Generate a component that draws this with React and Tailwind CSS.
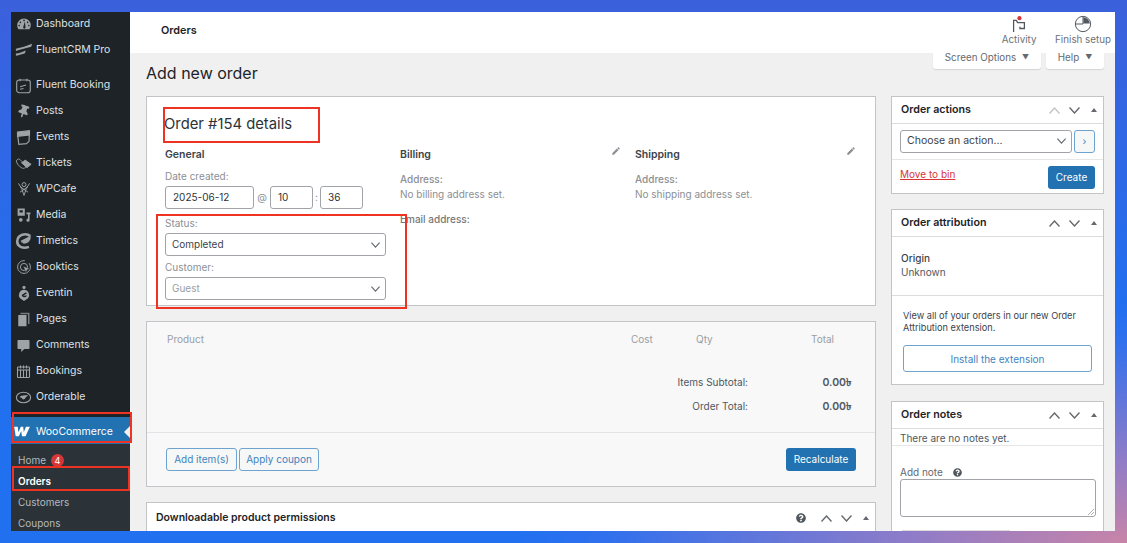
import { FaThumbtack, FaQuestionCircle } from "react-icons/fa";
import { MdEdit } from "react-icons/md";

const gray = "#9ea3a8";

function Dashboard() {
  return (
    <svg viewBox="0 0 20 20" className="w-[16px] h-[16px]" fill={gray}>
      <path d="M10 3a8.500 8.500 0 0 0-8.500 8.500c0 2 .7 3.800 1.800 5.200h13.400a8.400 8.400 0 0 0 1.800-5.200A8.500 8.500 0 0 0 10 3z" />
      <circle cx="10" cy="5.500" r="1" fill="#1d2327" />
      <circle cx="5.500" cy="8" r="1" fill="#1d2327" />
      <circle cx="14.500" cy="8" r="1" fill="#1d2327" />
      <circle cx="4" cy="12" r="1" fill="#1d2327" />
      <circle cx="16" cy="12" r="1" fill="#1d2327" />
      <path d="M9 14l2-7 1 7.500a1.500 1.500 0 0 1-3-.5z" fill="#1d2327" />
    </svg>
  );
}

function FluentCrm() {
  return (
    <svg viewBox="0 0 20 20" className="w-[18px] h-[18px]" fill={gray}>
      <path d="M1 8.500C7 7.500 13 5.500 19 3l-1 3.500C12 8 7 9.500 1 11z" />
      <path d="M1 14c4-.5 7-2 11-3.500l-1 3c-3 1-6 2-10 3z" />
    </svg>
  );
}

function FluentBooking() {
  return (
    <svg viewBox="0 0 20 20" className="w-[17px] h-[17px]" fill="none" stroke={gray} strokeWidth="1.300">
      <rect x="2" y="3.500" width="16" height="15" rx="3" />
      <path d="M6 2v3M14 2v3" />
      <path d="M6 11.500l7-2M6 14.500l4-1" />
    </svg>
  );
}

function Events() {
  return (
    <svg viewBox="0 0 20 20" className="w-[17px] h-[17px]" fill="none" stroke={gray} strokeWidth="1.400">
      <path d="M3 6l1.500 12 9-.7 3-2.800L17 4z" />
      <path d="M3 3.500L17 2v5L3 8.500z" fill={gray} />
    </svg>
  );
}

function Tickets() {
  return (
    <svg viewBox="0 0 20 20" className="w-[17px] h-[17px]" fill="none" stroke={gray} strokeWidth="1">
      <path d="M1.500 7c1-2 3-3 4-2l3 3c-1 1 0 2.500 1.500 3l3 3c-1 1.500-3 2-4.500 1.500C5 14 2 10 1.500 7z" />
      <path d="M8 9l4-3 7 5-5 4z" fill={gray} />
    </svg>
  );
}

function WpCafe() {
  return (
    <svg viewBox="0 0 20 20" className="w-[16px] h-[16px]" fill="none" stroke={gray} strokeWidth="1.200">
      <path d="M3 3l4 6 3 9M17 3l-4 6-3 9M5 14l10-7M15 14L5 7" />
      <circle cx="10" cy="4.500" r="2.500" />
    </svg>
  );
}

function Media() {
  return (
    <svg viewBox="0 0 20 20" className="w-[16px] h-[16px]" fill={gray}>
      <path d="M2 2h9v9H2zM4.500 4v3h4V4z" fillRule="evenodd" />
      <path d="M13 7h5v2h-1v7.500a2 2 0 1 1-2-2V9h-2z" />
      <circle cx="6" cy="16" r="2.300" />
    </svg>
  );
}

function Timetics() {
  return (
    <svg viewBox="0 0 20 20" className="w-[18px] h-[18px]" fill="none" stroke={gray} strokeWidth="2.800">
      <path d="M17 4.500C12 .5 3 3 2.500 10c-.5 6 6 9 13 6.500" />
      <path d="M7 11l9-4.500c0 3-3 5.500-7 5" />
    </svg>
  );
}

function Booktics() {
  return (
    <svg viewBox="0 0 20 20" className="w-[16px] h-[16px]" fill="none" stroke={gray} strokeWidth="1.200">
      <circle cx="10" cy="10" r="8" strokeDasharray="38 6" />
      <circle cx="10" cy="10" r="4.500" />
      <path d="M9 9l8 3-3 1.500-1.500 3.500z" fill={gray} stroke="#1d2327" strokeWidth=".6" />
    </svg>
  );
}

function Eventin() {
  return (
    <svg viewBox="0 0 20 20" className="w-[16px] h-[18px]" fill={gray}>
      <circle cx="10" cy="3" r="2" />
      <path d="M10 6a6.500 6.500 0 0 0-5 10.500L10 20l5-3.500A6.500 6.500 0 0 0 10 6zm-3 6.500l5.500-3.500 1 1.500-4.500 3 5-.5c-1 2-4 3-6 1.500z" fillRule="evenodd" />
    </svg>
  );
}

function Pages() {
  return (
    <svg viewBox="0 0 20 20" className="w-[15px] h-[15px]" fill={gray}>
      <path d="M6 1h12v15h-2V3H6z" opacity=".7" />
      <path d="M3 4h11v15H3z" />
    </svg>
  );
}

function Comments() {
  return (
    <svg viewBox="0 0 20 20" className="w-[15px] h-[15px]" fill={gray}>
      <path d="M3 2.500h14a1 1 0 0 1 1 1v10a1 1 0 0 1-1 1h-6l-4 4v-4H3a1 1 0 0 1-1-1v-10a1 1 0 0 1 1-1z" />
    </svg>
  );
}

function Bookings() {
  return (
    <svg viewBox="0 0 20 20" className="w-[15px] h-[15px]" fill="none" stroke={gray} strokeWidth="1.400">
      <rect x="2" y="4" width="16" height="14" rx="1" />
      <path d="M2 8h16M6 2v4M10 2v4M14 2v4M6 8v10M10 8v10M14 8v10" />
    </svg>
  );
}

function Orderable() {
  return (
    <svg viewBox="0 0 22 20" className="w-[17px] h-[15px]" fill="none" stroke={gray} strokeWidth="1.500">
      <ellipse cx="11" cy="10" rx="9.500" ry="7" />
      <path d="M6 9.500c1-2 4-2.500 11-2.500-1 1.500-2 2-3 2.500 0 1.500-2 3-4 3l-1-2z" fill={gray} stroke="none" />
    </svg>
  );
}

function WooLogo() {
  return (
    <svg viewBox="0 0 20 14" className="w-[16px] h-[11px]" fill="#fff">
      <path d="M0 1h4.500l1 7 3-7h3l.8 7L15 1h5l-5.500 12H10l-1-6.500L6 13H2z" />
    </svg>
  );
}

const topItems = [
  ["Dashboard", Dashboard, "h-[25px] pb-[1px]"],
  ["FluentCRM Pro", FluentCrm, "h-[26px] mb-[9px]"],
  ["Fluent Booking", FluentBooking, "h-[26px]"],
  ["Posts", () => <FaThumbtack color={gray} size={13} className="rotate-[20deg]" />, "h-[26px]"],
  ["Events", Events, "h-[26px]"],
  ["Tickets", Tickets, "h-[26px]"],
  ["WPCafe", WpCafe, "h-[26px]"],
  ["Media", Media, "h-[26px]"],
  ["Timetics", Timetics, "h-[26px]"],
  ["Booktics", Booktics, "h-[26px]"],
  ["Eventin", Eventin, "h-[26px]"],
  ["Pages", Pages, "h-[26px]"],
  ["Comments", Comments, "h-[26px]"],
  ["Bookings", Bookings, "h-[26px]"],
  ["Orderable", Orderable, "h-[26px]"],
];

function Sidebar() {
  return (
    <aside className="w-[119px] shrink-0 bg-[#1d2327] flex flex-col overflow-hidden">
      {topItems.map(([label, Icon, rowClass]) => (
        <div key={label} className={`shrink-0 flex items-center text-[10.500px] text-[#dfe1e3] ${rowClass}`}>
          <span className="w-[25px] flex justify-center shrink-0"><Icon /></span>
          <span>{label}</span>
        </div>
      ))}
      <div className="relative mt-[7px] h-[27px] pt-[2px] shrink-0 bg-[#2271b1] flex items-center text-[10.500px] text-white">
        <span className="w-[22px] flex justify-center shrink-0"><WooLogo /></span>
        <span className="ml-[3px]">WooCommerce</span>
        <span className="absolute right-0 top-[9px] border-y-[6px] border-y-transparent border-r-[6px] border-r-[#f0f0f1]" />
      </div>
      <div className="flex-1 bg-[#2c3338] pt-[6px] text-[10px] text-[#b4b9be]">
        <div className="h-[21px] flex items-center pl-[7px] gap-[5px]">
          Home
          <span className="w-[13px] h-[13px] rounded-full bg-[#d63638] text-white text-[9px] flex items-center justify-center">4</span>
        </div>
        <div className="h-[21px] flex items-center pl-[7px] font-semibold text-white">Orders</div>
        <div className="h-[21px] flex items-center pl-[7px]">Customers</div>
        <div className="h-[21px] flex items-center pl-[7px]">Coupons</div>
      </div>
    </aside>
  );
}

function TopBar() {
  return (
    <header className="h-[41px] shrink-0 bg-white flex items-center justify-between pl-[31px] pr-[4px]">
      <span className="text-[10.800px] font-semibold text-[#1d2327] -mt-[3px]">Orders</span>
      <div className="flex items-start self-start">
        <div className="w-[56px] flex flex-col items-center text-[9.800px] leading-[12px] text-[#6c7176]">
          <svg viewBox="0 0 20 20" className="w-[18px] h-[18px] mt-[3px]" fill="none" stroke="#50575e" strokeWidth="1.400">
            <path d="M4 19V6h3l1.500 2.500H16V15h-5v-2" />
            <circle cx="10.500" cy="3.500" r="2.300" fill="#d63638" stroke="none" />
          </svg>
          <span className="mt-[1px]">Activity</span>
        </div>
        <div className="ml-[8px] flex flex-col items-center text-[9.800px] leading-[12px] text-[#6c7176]">
          <svg viewBox="0 0 20 20" className="w-[18px] h-[18px] mt-[3px]" fill="none" stroke="#50575e" strokeWidth="1.100">
            <circle cx="10" cy="10" r="8.500" />
            <path d="M10 2v8H2" />
            <path d="M10.500 2.500a7.500 7.500 0 0 1 7 7h-7z" fill="#50575e" stroke="none" />
          </svg>
          <span className="mt-[1px]">Finish setup</span>
        </div>
      </div>
    </header>
  );
}

function ScreenTabs() {
  return (
    <div className="flex justify-end gap-[5px] pr-[11px] text-[9.800px] text-[#646970]">
      <div className="w-[108px] h-[16px] pb-[5px] bg-white rounded-b-[3px] shadow-[0_1px_1px_rgba(0,0,0,0.12)] flex items-center justify-center gap-[6px]">
        Screen Options <span className="text-[7px]">▼</span>
      </div>
      <div className="w-[58px] h-[16px] pb-[5px] bg-white rounded-b-[3px] shadow-[0_1px_1px_rgba(0,0,0,0.12)] flex items-center justify-center gap-[6px]">
        Help <span className="text-[7px]">▼</span>
      </div>
    </div>
  );
}

function Chevron({ up, faded, className = "w-[11px] h-[7px]" }) {
  return (
    <svg viewBox="0 0 11 7" className={className} fill="none" stroke={faded ? "#c3c4c7" : "#646970"} strokeWidth="1.400">
      <path d={up ? "M.5 6.500L5.500 1l5 5.500" : "M.5.500l5 5.500 5-5.500"} />
    </svg>
  );
}

function HandleIcons({ fadedUp }) {
  return (
    <div className="flex items-center gap-[9px]">
      <Chevron up faded={fadedUp} />
      <Chevron />
      <span className="ml-[2px] border-x-[3.500px] border-x-transparent border-b-[4.500px] border-b-[#646970]" />
    </div>
  );
}

function Label({ children, className = "" }) {
  return <div className={`text-[10px] leading-[13px] text-[#8c8f94] ${className}`}>{children}</div>;
}

function FakeSelect({ children, muted, large, className = "" }) {
  return (
    <div className={`h-[23px] bg-white border border-[#a0a3a8] rounded-[3px] flex items-center justify-between pl-[6px] pr-[5px] ${large ? "text-[10.500px] pb-[2px]" : "text-[10px]"} ${muted ? "text-[#9a9ea3]" : "text-[#3c434a]"} ${className}`}>
      {children}
      <Chevron className="w-[9px] h-[6px]" />
    </div>
  );
}

function TextBox({ value, className }) {
  return (
    <div className={`h-[23px] bg-white border border-[#a0a3a8] rounded-[3px] flex items-center pl-[7px] text-[10px] text-[#2c3338] ${className}`}>
      {value}
    </div>
  );
}

function AddressColumn({ title, empty, email }) {
  return (
    <div className="w-[235px] pr-[14px]">
      <div className="relative text-[10.500px] font-semibold text-[#3c434a] leading-[14px]">
        {title}
        <MdEdit size={10} color="#8c8f94" className="absolute top-[-2px] right-[0px]" />
      </div>
      <Label className="font-medium mt-[11px]">Address:</Label>
      <Label className="mt-[2px]">{empty}</Label>
      {email && <Label className="font-medium text-[#777] mt-[12px]">Email address:</Label>}
    </div>
  );
}

function OrderDetails() {
  return (
    <section className="h-[210px] bg-white border border-[#c3c4c7] pl-[18px] pt-[17px]">
      <h2 className="-ml-[1px] text-[14.800px] leading-[20px] text-[#2c3338]">Order #154 details</h2>
      <div className="flex mt-[14px]">
        <div className="w-[235px] pr-[14px]">
          <div className="text-[10.500px] font-semibold text-[#3c434a] leading-[14px]">General</div>
          <Label className="mt-[8px]">Date created:</Label>
          <div className="flex items-center mt-[3px] text-[10px] text-[#8c8f94]">
            <TextBox value="2025-06-12" className="w-[89px]" />
            <span className="w-[16px] text-center">@</span>
            <TextBox value="10" className="w-[43px]" />
            <span className="w-[7px] text-center">:</span>
            <TextBox value="36" className="w-[43px]" />
          </div>
          <Label className="mt-[8px]">Status:</Label>
          <FakeSelect className="mt-[3px]">Completed</FakeSelect>
          <Label className="mt-[5px]">Customer:</Label>
          <FakeSelect muted className="mt-[3px]">Guest</FakeSelect>
        </div>
        <AddressColumn title="Billing" empty="No billing address set." email />
        <AddressColumn title="Shipping" empty="No shipping address set." />
      </div>
    </section>
  );
}

function OutlineButton({ children, className = "" }) {
  return (
    <div className={`h-[23px] bg-[#f6f7f7] border border-[#6fa3cf] rounded-[3px] flex items-center justify-center text-[10px] text-[#3f84bd] ${className}`}>
      {children}
    </div>
  );
}

function PrimaryButton({ children, className = "" }) {
  return (
    <div className={`h-[23px] bg-[#2271b1] rounded-[3px] flex items-center justify-center text-[10px] text-white ${className}`}>
      {children}
    </div>
  );
}

function OrderItems() {
  return (
    <section className="h-[166px] mt-[15px] bg-[#f8f8f8] border border-[#c3c4c7] flex flex-col">
      <div className="h-[111px] border-b border-[#e2e3e4] shrink-0 text-[10px]">
        <div className="flex pt-[11px] text-[#9a9ea3] leading-[13px]">
          <span className="ml-[20px] w-[464px]">Product</span>
          <span className="w-[65px]">Cost</span>
          <span className="w-[115px]">Qty</span>
          <span>Total</span>
        </div>
        <div className="flex justify-end items-center mt-[30px] h-[13px] pr-[24px] text-[#50575e]">
          <span>Items Subtotal:</span>
          <span className="w-[103px] text-right font-semibold text-[10.500px]">0.00৳</span>
        </div>
        <div className="flex justify-end items-center mt-[11px] h-[13px] pr-[24px] text-[#50575e]">
          <span>Order Total:</span>
          <span className="w-[103px] text-right font-semibold text-[10.500px]">0.00৳</span>
        </div>
      </div>
      <div className="flex items-center justify-between pl-[19px] pr-[19px] pt-[15px]">
        <div className="flex gap-[2px]">
          <OutlineButton className="w-[71px]">Add item(s)</OutlineButton>
          <OutlineButton className="w-[80px]">Apply coupon</OutlineButton>
        </div>
        <PrimaryButton className="w-[70px]">Recalculate</PrimaryButton>
      </div>
    </section>
  );
}

function Downloads() {
  return (
    <section className="mt-[15px] h-[40px] bg-white border border-[#c3c4c7] flex items-start justify-between pl-[9px] pr-[6px] pt-[7px]">
      <span className="text-[10.500px] font-semibold text-[#1d2327]">Downloadable product permissions</span>
      <div className="flex items-center mt-[3px]">
        <FaQuestionCircle size={10} color="#50575e" className="mr-[15px]" />
        <HandleIcons />
      </div>
    </section>
  );
}

function SideBox({ title, fadedUp, className = "", children }) {
  return (
    <section className={`bg-white border border-[#c3c4c7] ${className}`}>
      <div className="h-[27px] border-b border-[#dcdcde] flex items-center justify-between pl-[9px] pr-[6px]">
        <span className="text-[10.700px] font-semibold text-[#1d2327]">{title}</span>
        <HandleIcons fadedUp={fadedUp} />
      </div>
      {children}
    </section>
  );
}

function SideColumn() {
  return (
    <div className="w-[213px] shrink-0 text-[10px]">
      <SideBox title="Order actions" fadedUp className="h-[98px]">
        <div className="flex gap-[2px] px-[8px] pt-[6px] pb-[6px] border-b border-[#e6e6e7]">
          <FakeSelect large className="w-[172px]">Choose an action...</FakeSelect>
          <OutlineButton className="w-[21px]">›</OutlineButton>
        </div>
        <div className="flex items-start justify-between px-[8px] pt-[6px]">
          <span className="text-[#d63638] underline mt-[1px]">Move to bin</span>
          <PrimaryButton className="w-[47px]">Create</PrimaryButton>
        </div>
      </SideBox>
      <SideBox title="Order attribution" className="h-[176px] mt-[15px]">
        <div className="h-[59px] border-b border-[#dcdcde] pl-[9px] pt-[14px] leading-[14px] text-[#50575e]">
          <div className="font-medium text-[#3c434a]">Origin</div>
          <div>Unknown</div>
        </div>
        <div className="px-[11px] pt-[14px] leading-[12px] text-[#3c434a] text-[9.200px]">
          <p>View all of your orders in our new Order Attribution extension.</p>
          <div className="mt-[11px] h-[27px] bg-white border border-[#6fa3cf] rounded-[3px] flex items-center justify-center text-[#3f84bd] text-[10px]">
            Install the extension
          </div>
        </div>
      </SideBox>
      <SideBox title="Order notes" className="h-[140px] mt-[16px]">
        <div className="h-[17px] border-b border-[#e6e6e7] pl-[8px] pt-[1px] text-[#50575e] leading-[16px]">There are no notes yet.</div>
        <div className="px-[8px] pt-[20px]">
          <div className="flex items-center text-[#646970] leading-[13px]">
            Add note
            <FaQuestionCircle size={9} color="#50575e" className="ml-[10px]" />
          </div>
          <div className="relative h-[38px] w-[196px] bg-white border border-[#a0a3a8] rounded-[3px]">
            <svg viewBox="0 0 6 6" className="absolute right-[1px] bottom-[1px] w-[6px] h-[6px]" stroke="#8c8f94" strokeWidth=".7">
              <path d="M0 6l6-6M3 6l3-3" />
            </svg>
          </div>
          <div className="mt-[13px] ml-[2px] h-[10px] w-[108px] bg-[#dcdcde]" />
        </div>
      </SideBox>
    </div>
  );
}

function RedBox({ className }) {
  return <div className={`absolute border-2 border-[#ee3322] pointer-events-none ${className}`} />;
}

export default function App() {
  return (
    <div className="relative w-[1127px] h-[543px] overflow-hidden pl-[11px] pr-[12px] pt-[12px] pb-[12px] font-['Inter',sans-serif] bg-[radial-gradient(ellipse_620px_240px_at_100%_100%,#c884a8_0%,#8f7cc8_35%,#2f70ee_85%,transparent_100%),linear-gradient(#3c60dc,#2070f0_60%)]">
      <div className="h-[519px] flex overflow-hidden bg-[#f0f0f1]">
        <Sidebar />
        <main className="flex-1 min-w-0 flex flex-col">
          <TopBar />
          <ScreenTabs />
          <h1 className="ml-[16px] mt-[-8px] text-[16px] leading-[24px] text-[#1d2327]">Add new order</h1>
          <div className="flex gap-[15px] pl-[16px] mt-[11px]">
            <div className="w-[730px] shrink-0">
              <OrderDetails />
              <OrderItems />
              <Downloads />
            </div>
            <SideColumn />
          </div>
        </main>
      </div>
      <RedBox className="left-[163px] top-[107px] w-[157px] h-[36px]" />
      <RedBox className="left-[156px] top-[214px] w-[251px] h-[95px]" />
      <RedBox className="left-[12px] top-[412px] w-[120px] h-[31px]" />
      <RedBox className="left-[12px] top-[466px] w-[118px] h-[25px]" />
    </div>
  );
}
